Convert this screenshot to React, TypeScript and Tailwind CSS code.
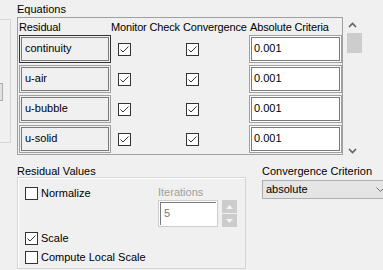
import React from "react";

const rows = ["continuity", "u-air", "u-bubble", "u-solid"];

// Windows style check box
const Check = ({ checked }: { checked?: boolean }) => (
  <span className="flex h-[13px] w-[13px] shrink-0 items-center justify-center border border-[#333333] bg-white">
    {checked && (
      <svg width="11" height="11" viewBox="0 0 11 11">
        <path d="M1.5 5.5 L4 8 L9.5 2.5" fill="none" stroke="#333333" strokeWidth="1" />
      </svg>
    )}
  </span>
);

const Chevron = ({ up }: { up?: boolean }) => (
  <svg width="9" height="6" viewBox="0 0 9 6">
    <path
      d={up ? "M1 5 L4.5 1.5 L8 5" : "M1 1 L4.5 4.5 L8 1"}
      fill="none"
      stroke="#606060"
      strokeWidth="1.6"
    />
  </svg>
);

export default function App() {
  return (
    <div
      className="relative flex h-[270px] w-[383px] flex-col overflow-hidden bg-[#f0f0f0] text-[11px] text-black"
      style={{ fontFamily: '"Liberation Sans", Arial, sans-serif' }}
    >
      {/* top part */}
      <div className="flex h-[160px] shrink-0">
        {/* left panel edge */}
        <div className="w-[17px] shrink-0">
          <div className="mt-[19px] h-[124px] w-[11px] border-y border-r border-[#d5d5d5]">
            <div className="ml-[-1px] mt-[63px] h-[18px] w-[4px] border border-[#adadad] bg-[#e1e1e1]" />
          </div>
        </div>

        {/* Equations */}
        <div className="w-[326px] shrink-0">
          <div className="h-[17px] pt-[2px] leading-[14px]">Equations</div>
          <div className="h-[138px] overflow-hidden border border-[#a0a0a0] bg-[#f0f0f0]">
            <div className="grid h-[17px] grid-cols-[1px_92px_70px_68px_93px] items-center whitespace-nowrap pt-px leading-[14px] tracking-[-0.15px]">
              <span />
              <span>Residual</span>
              <span>Monitor Check</span>
              <span className="pl-[2px]">Convergence</span>
              <span className="pl-[1px]">Absolute Criteria</span>
            </div>
            <div className="flex flex-col gap-[2px]">
              {rows.map((r, i) => (
                <div key={r} className="grid h-[28px] grid-cols-[1px_92px_70px_68px_93px] items-center">
                  <span />
                  <div
                    className={`h-[28px] border ${i === 0 ? "border-[#333333]" : "border-[#a0a0a0]"} bg-[#f0f0f0] p-px`}
                  >
                    <div className="h-full border border-[#7a7a7a] pl-[3px] pt-[3px] leading-[14px]">{r}</div>
                  </div>
                  <div className="pl-[7px]">
                    <Check checked />
                  </div>
                  <div className="pl-[5px]">
                    <Check checked />
                  </div>
                  <div className="h-[28px] border border-[#a0a0a0] bg-white p-px">
                    <div className="h-full border border-[#7a7a7a] pl-[2px] pt-[3px] leading-[14px]">0.001</div>
                  </div>
                </div>
              ))}
            </div>
          </div>
        </div>

        {/* scrollbar */}
        <div className="ml-px flex w-[17px] flex-col items-center pt-[17px]">
          <div className="flex h-[16px] items-center justify-center">
            <Chevron up />
          </div>
          <div className="ml-[4px] h-[20px] w-[15px] bg-[#cdcdcd]" />
          <div className="mt-[90px] flex h-[16px] items-center justify-center">
            <Chevron />
          </div>
        </div>
      </div>

      {/* bottom part */}
      <div className="flex">
        <div className="ml-[17px] w-[229px] shrink-0">
          <div className="h-[17px] pt-[5px] leading-[12px]">Residual Values</div>
          <div className="flex h-[92px] flex-col border border-[#d5d5d5] pl-[7px] pt-[8px] shadow-[inset_1px_1px_0_#ffffff]">
            <div className="flex h-[44px]">
              <div className="flex h-[14px] w-[133px] items-center gap-[3px]">
                <Check />
                <span>Normalize</span>
              </div>
              <div className="flex flex-col">
                <span className="h-[14px] leading-[12px] text-[#a0a0a0]">Iterations</span>
                <div className="flex">
                  <div className="h-[27px] w-[60px] border border-[#cccccc] bg-white p-px">
                    <div className="h-full border-l border-t border-[#7a7a7a] pl-[3px] pt-[3px] leading-[14px] text-[#7a7a7a]">
                      5
                    </div>
                  </div>
                  <div className="ml-[4px] flex flex-col gap-px">
                    <div className="flex h-[13px] w-[15px] items-center justify-center bg-[#cccccc]">
                      <svg width="7" height="4" viewBox="0 0 7 4">
                        <path d="M0 4 L3.5 0 L7 4 Z" fill="#f4f4f4" />
                      </svg>
                    </div>
                    <div className="flex h-[13px] w-[15px] items-center justify-center bg-[#cccccc]">
                      <svg width="7" height="4" viewBox="0 0 7 4">
                        <path d="M0 0 L3.5 4 L7 0 Z" fill="#f4f4f4" />
                      </svg>
                    </div>
                  </div>
                </div>
              </div>
            </div>
            <div className="mt-[1px] flex h-[14px] items-center gap-[3px]">
              <Check checked />
              <span>Scale</span>
            </div>
            <div className="mt-[5px] flex h-[14px] items-center gap-[3px]">
              <Check />
              <span>Compute Local Scale</span>
            </div>
          </div>
        </div>

        {/* Convergence Criterion */}
        <div className="ml-[16px] flex-1">
          <div className="h-[20px] pt-[5px] leading-[12px]">Convergence Criterion</div>
          <div className="flex h-[19px] w-[130px] items-center justify-between border border-[#adadad] bg-[#e5e5e5] pl-[3px] pr-[6px]">
            <span>absolute</span>
            <svg width="9" height="5" viewBox="0 0 9 5">
              <path d="M0.5 0.5 L4.5 4.5 L8.5 0.5" fill="none" stroke="#707070" strokeWidth="1" />
            </svg>
          </div>
        </div>
      </div>
    </div>
  );
}
